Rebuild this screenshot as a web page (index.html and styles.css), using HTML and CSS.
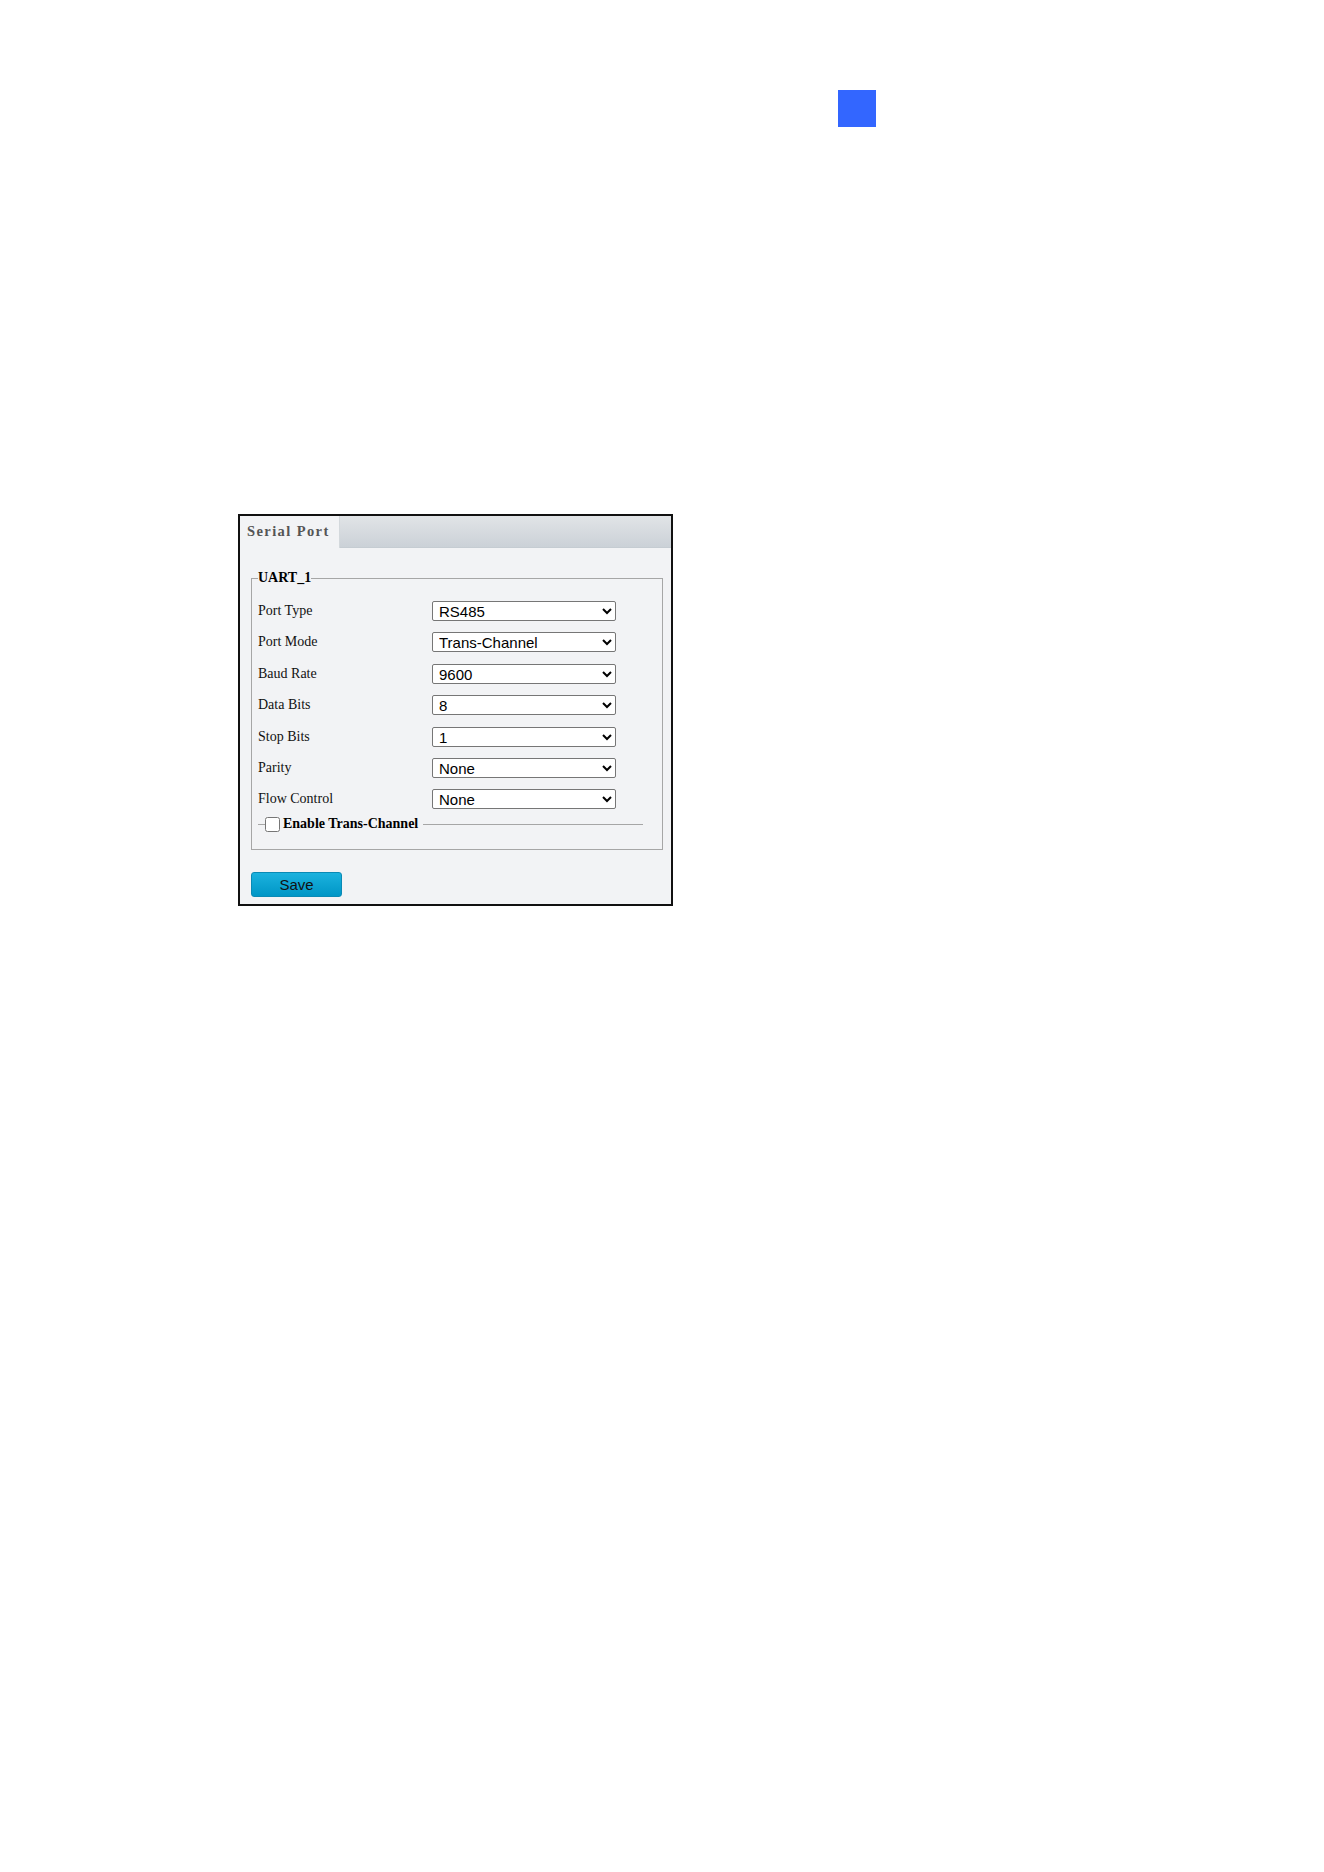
FILE: index.html
```html
<!DOCTYPE html>
<html lang="en">
<head>
    <meta charset="UTF-8">
    <title>Serial Port</title>
    <link rel="stylesheet" href="styles.css">
</head>
<body>
<div class="page">
    <div class="chapter-mark"></div>

    <div class="panel">
        <div class="tabs">
            <div class="tab active">Serial Port</div>
            <div class="tab-rest"></div>
        </div>

        <form class="panel-body" onsubmit="return false">
            <fieldset class="group">
                <legend>UART_1</legend>
                <div class="rows">
                    <label for="port-type">Port Type</label>
                    <select id="port-type"><option>RS485</option></select>

                    <label for="port-mode">Port Mode</label>
                    <select id="port-mode"><option>Trans-Channel</option></select>

                    <label for="baud-rate">Baud Rate</label>
                    <select id="baud-rate"><option>9600</option></select>

                    <label for="data-bits">Data Bits</label>
                    <select id="data-bits"><option>8</option></select>

                    <label for="stop-bits">Stop Bits</label>
                    <select id="stop-bits"><option>1</option></select>

                    <label for="parity">Parity</label>
                    <select id="parity"><option>None</option></select>

                    <label for="flow-control">Flow Control</label>
                    <select id="flow-control"><option>None</option></select>
                </div>

                <div class="sub-group">
                    <span class="rule short"></span>
                    <input type="checkbox" id="trans-channel">
                    <label for="trans-channel">Enable Trans-Channel</label>
                    <span class="rule"></span>
                </div>
            </fieldset>

            <button type="submit" class="btn-save">Save</button>
        </form>
    </div>
</div>
</body>
</html>
```

FILE: styles.css
```css
body {
    margin: 0;
    background: #fff;
    font-family: "Liberation Serif", "Times New Roman", serif;
}

.page {
    width: 1324px;
    height: 1872px;
    padding-top: 90px;
    box-sizing: border-box;
}

.chapter-mark {
    width: 38px;
    height: 37px;
    margin-left: 838px;
    background-color: #3366ff;
}

.panel {
    width: 435px;
    height: 392px;
    margin: 387px 0 0 238px;
    box-sizing: border-box;
    border: 2px solid #111;
    background-color: #f2f3f5;
}

.tabs {
    display: flex;
    height: 32px;
}
.tab {
    width: 100px;
    box-sizing: border-box;
    padding-left: 7px;
    line-height: 30px;
    font-size: 14.5px;
    font-weight: bold;
    letter-spacing: 1.4px;
    color: #555;
    background-color: #f2f3f5;
    border-right: 1px solid #d3d8dc;
}
.tab-rest {
    flex: 1;
    background: linear-gradient(#e1e4e7, #cbd1d7);
    border-bottom: 1px solid #c5ccd2;
}

.panel-body {
    padding: 22px 8px 0 11px;
}

.group {
    margin: 0;
    padding: 15px 6px 17px 6px;
    border: 1px solid #a6a6a6;
}
.group legend {
    padding: 0;
    font-size: 14px;
    font-weight: bold;
    color: #000;
}

.rows {
    display: grid;
    grid-template-columns: 174px 184px;
    grid-auto-rows: 20px;
    row-gap: 11.4px;
    align-items: center;
}
.rows label {
    font-size: 14px;
    color: #111;
}
.rows select {
    height: 20px;
    padding: 0 0 0 2px;
    font-family: "Liberation Sans", Arial, sans-serif;
    font-size: 15px;
    color: #000;
    background-color: #fff;
    border: 1px solid #767676;
    border-radius: 2px;
}

.sub-group {
    display: flex;
    align-items: center;
    margin-top: 7px;
    padding-right: 13px;
}
.sub-group .rule {
    flex: 1;
    height: 1px;
    margin-left: 5px;
    background-color: #a6a6a6;
}
.sub-group .rule.short {
    flex: none;
    width: 7px;
    margin: 0;
}
.sub-group input[type="checkbox"] {
    width: 15px;
    height: 15px;
    margin: 0 3px 0 0;
}
.sub-group label {
    font-size: 14px;
    font-weight: bold;
    color: #000;
}

.btn-save {
    display: block;
    width: 91px;
    height: 25px;
    margin: 22px 0 0 0;
    padding: 0;
    font-family: "Liberation Sans", Arial, sans-serif;
    font-size: 15px;
    color: #111;
    background: linear-gradient(#1bb2de, #0096c6);
    border: 1px solid #0a8ab5;
    border-radius: 3px;
    cursor: pointer;
}
```
